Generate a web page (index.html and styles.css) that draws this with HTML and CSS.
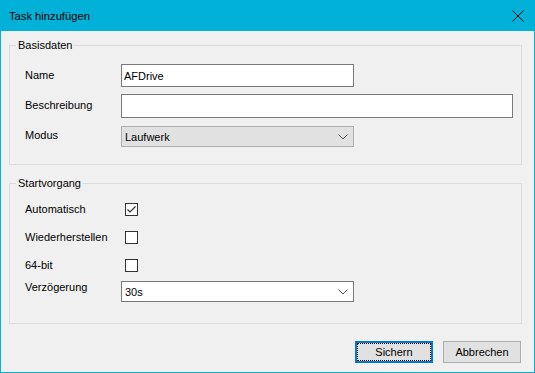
FILE: index.html
```html
<!DOCTYPE html>
<html lang="de">
<head>
  <meta charset="UTF-8" />
  <title>Task hinzufügen</title>
  <link rel="stylesheet" href="styles.css">
</head>
<body>
  <div class="window">
    <header class="titlebar">
      <span class="title">Task hinzufügen</span>
      <svg class="close" width="12" height="12" viewBox="0 0 12 12">
        <path d="M0.5 0.5L11.5 11.5M11.5 0.5L0.5 11.5" stroke="#111" stroke-width="1" fill="none" />
      </svg>
    </header>

    <main class="client">
      <fieldset class="group">
        <legend>Basisdaten</legend>
        <div class="fields basis">
          <label>Name</label>
          <input class="textbox short" type="text" value="AFDrive" />
          <label>Beschreibung</label>
          <input class="textbox long" type="text" value="" />
          <label>Modus</label>
          <div class="combo short readonly">
            <span>Laufwerk</span>
            <svg width="10" height="6" viewBox="0 0 10 6"><path d="M0.5 0.5L5 5L9.5 0.5" stroke="#555" fill="none" /></svg>
          </div>
        </div>
      </fieldset>

      <fieldset class="group">
        <legend>Startvorgang</legend>
        <div class="fields start">
          <label>Automatisch</label>
          <span class="check">
            <svg width="11" height="11" viewBox="0 0 11 11"><path d="M1.5 5.5L4 8L9.5 2.5" stroke="#333" stroke-width="1.2" fill="none" /></svg>
          </span>
          <label>Wiederherstellen</label>
          <span class="check"></span>
          <label>64-bit</label>
          <span class="check"></span>
          <label class="top">Verzögerung</label>
          <div class="combo short">
            <span>30s</span>
            <svg width="10" height="6" viewBox="0 0 10 6"><path d="M0.5 0.5L5 5L9.5 0.5" stroke="#555" fill="none" /></svg>
          </div>
        </div>
      </fieldset>

      <div class="buttons">
        <button class="btn default"><span>Sichern</span></button>
        <button class="btn">Abbrechen</button>
      </div>
    </main>
  </div>
</body>
</html>
```

FILE: styles.css
```css
* {
  box-sizing: border-box;
}

body {
  margin: 0;
  font-family: 'Liberation Sans', Arial, sans-serif;
  font-size: 11px;
  color: #000;
  background: #f0f0f0;
}

.window {
  width: 535px;
  height: 373px;
  border: 1px solid #01b1d8;
  border-top: none;
  background: #f0f0f0;
  display: flex;
  flex-direction: column;
}

.titlebar {
  height: 31px;
  margin: 0 -1px;
  background: #01b1d8;
  display: flex;
  align-items: center;
  justify-content: space-between;
  padding: 0 11px 0 9px;
}

.title {
  font-size: 11.2px;
  padding-top: 1px;
}

.close {
  width: 12px;
  height: 12px;
  margin-top: 1px;
}

.client {
  flex: 1;
  padding: 8px 12px 0 8px;
  display: flex;
  flex-direction: column;
}

.group {
  margin: 0;
  padding: 0;
  border: 1px solid #dcdcdc;
  min-width: 0;
}

.group + .group {
  margin-top: 12px;
}

.group legend {
  margin-left: 6px;
  padding: 0 2px;
  line-height: 13px;
}

.fields {
  display: grid;
  grid-template-columns: 96px auto;
  align-items: center;
  justify-items: start;
  padding-left: 15px;
}

.fields label {
  margin-top: -2px;
}

.fields label.top {
  align-self: start;
  margin-top: 0;
}

.basis {
  padding-top: 12px;
  padding-bottom: 17px;
  row-gap: 7px;
}

.start {
  padding-top: 13px;
  padding-bottom: 15px;
  grid-template-rows: 13px 13px 13px 21px;
  row-gap: 15px;
}

.start .combo {
  align-self: start;
  margin-top: -6px;
}

.start label.top {
  margin-top: -6px;
}

.textbox {
  height: 23px;
  margin: 0;
  border: 1px solid #7a7a7a;
  background: #fff;
  padding: 0 2px;
  font: inherit;
  color: #000;
}

.textbox.long {
  width: 392px;
  height: 24px;
}

.short {
  width: 233px;
}

.combo {
  height: 21px;
  border: 1px solid #7a7a7a;
  background: #fff;
  display: flex;
  align-items: center;
  justify-content: space-between;
  padding: 0 5px 0 3px;
}

.combo.readonly {
  background: #e1e1e1;
  border-color: #adadad;
  margin-top: 1px;
}

.check {
  width: 13px;
  height: 13px;
  margin-left: 4px;
  border: 1px solid #333;
  background: #fff;
  display: flex;
  align-items: center;
  justify-content: center;
}

.buttons {
  display: flex;
  justify-content: flex-end;
  gap: 10px;
  margin-top: 17px;
  padding-right: 1px;
}

.btn {
  width: 78px;
  height: 22px;
  padding: 0;
  border: 1px solid #adadad;
  background: #e1e1e1;
  font: inherit;
  color: #000;
}

.btn.default {
  border: 2px solid #0078d7;
  padding: 1px;
}

.btn.default span {
  display: flex;
  align-items: center;
  justify-content: center;
  height: 100%;
  outline: 1px dotted #000;
}
```
